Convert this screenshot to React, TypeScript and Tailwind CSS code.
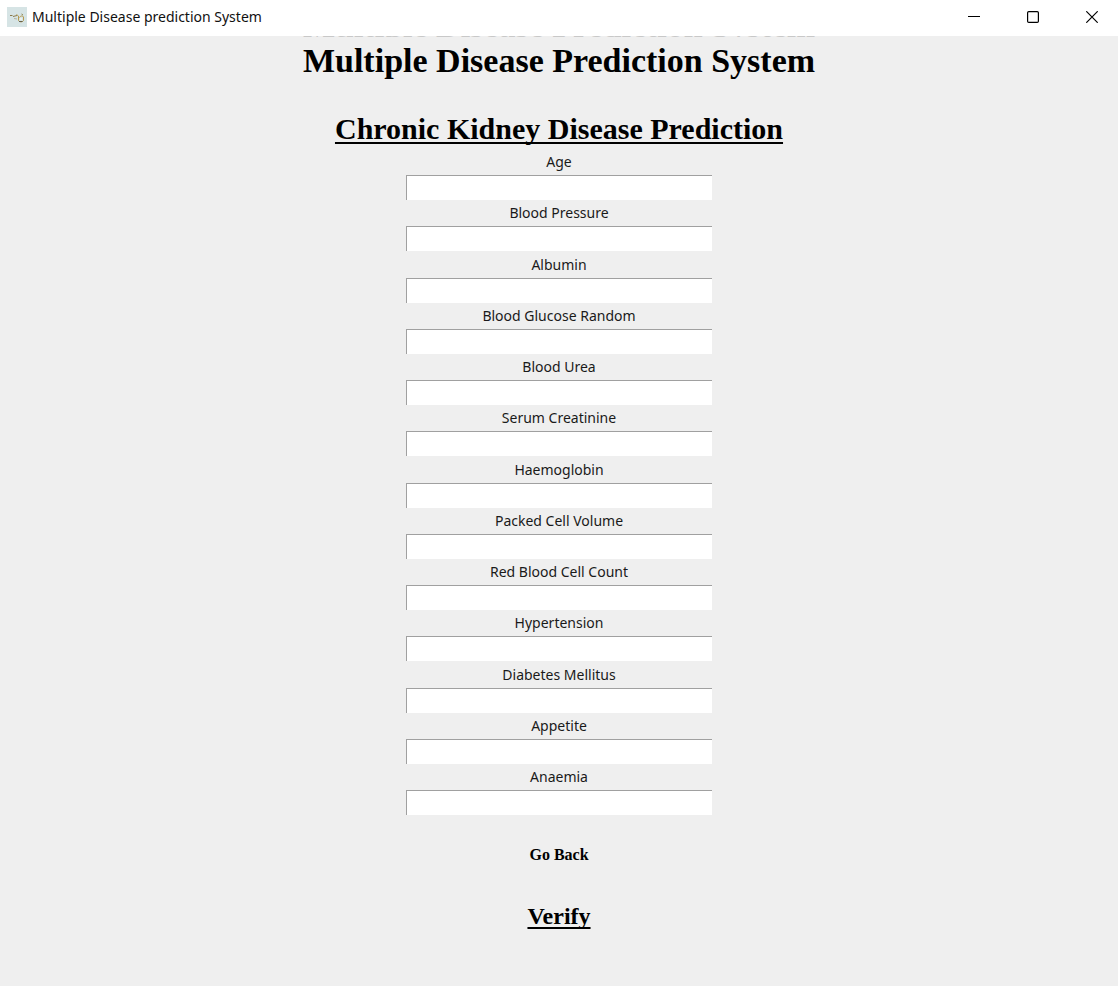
import React from "react";

const title = "Multiple Disease Prediction System";

const fields = [
  "Age",
  "Blood Pressure",
  "Albumin",
  "Blood Glucose Random",
  "Blood Urea",
  "Serum Creatinine",
  "Haemoglobin",
  "Packed Cell Volume",
  "Red Blood Cell Count",
  "Hypertension",
  "Diabetes Mellitus",
  "Appetite",
  "Anaemia",
];

function AppIcon() {
  return (
    <svg width="20" height="20" viewBox="0 0 20 20" aria-hidden="true">
      <rect width="20" height="20" fill="#d6e4e5" />
      <path d="M3 8.500h2.500M6 9.500l4-1" stroke="#8c7a4a" fill="none" />
      <path d="M7 11.500l3 .5" stroke="#b7b59c" fill="none" />
      <path d="M9.500 7.500l2 1.500v4.500c.5 1.500 4 2 5 0V10c-.5-1.500-3-1.500-4 .5" stroke="#b59a50" fill="none" />
      <path d="M14.500 7l1.500 1" stroke="#8b8455" fill="none" />
      <path d="M12 14.500h3.500" stroke="#66604a" fill="none" />
      <path d="M13 11h2v2h-2z" fill="#eaf1ef" />
    </svg>
  );
}

function TitleBar() {
  return (
    <header className="flex h-9 items-center justify-between bg-white pb-0.5 font-['Noto_Sans',sans-serif]">
      <div className="flex items-center gap-[5px] pl-[7px]">
        <AppIcon />
        <span className="text-[14px] leading-5 text-[#111]">Multiple Disease prediction System</span>
      </div>
      <div className="flex gap-[7px]">
        <button type="button" aria-label="Minimize" className="flex h-8 w-[52px] items-center justify-center">
          <svg width="12" height="12" viewBox="0 0 12 12"><path d="M0 5.500h12" stroke="#000" /></svg>
        </button>
        <button type="button" aria-label="Maximize" className="flex h-8 w-[52px] items-center justify-center">
          <svg width="12" height="12" viewBox="0 0 12 12"><rect x="0.6" y="0.6" width="10.8" height="10.8" rx="1.2" fill="none" stroke="#000" strokeWidth="1.2" /></svg>
        </button>
        <button type="button" aria-label="Close" className="flex h-8 w-[52px] items-center justify-center">
          <svg width="12" height="12" viewBox="0 0 12 12"><path d="M0.300 0.300l11.400 11.400M11.700 0.300L0.300 11.700" stroke="#000" strokeWidth="1.2" /></svg>
        </button>
      </div>
    </header>
  );
}

export default function App() {
  return (
    <div className="flex min-h-screen flex-col bg-[#efefef] text-black">
      <TitleBar />
      <main className="flex flex-1 flex-col items-center font-['Liberation_Serif',serif]">
        <div aria-hidden="true" className="flex h-px flex-col justify-end overflow-hidden text-[34px] leading-[22px] font-bold text-[#c8c8c8]">
          {title}
        </div>
        <h1 className="pt-1 text-[34px] leading-10 font-bold">{title}</h1>
        <h2 className="mt-[30px] text-[30px] leading-9 font-bold underline decoration-2 underline-offset-3 [text-decoration-skip-ink:none]">
          Chronic Kidney Disease Prediction
        </h2>
        <form className="mt-0.5 flex flex-col items-center" onSubmit={(e) => e.preventDefault()}>
          <div className="flex min-h-[666px] flex-col justify-between">
            {fields.map((name) => (
              <div key={name} className="flex flex-col items-center font-['Noto_Sans',sans-serif]">
                <label htmlFor={name} className="text-[14px] leading-[26px] text-[#1a1a1a]">
                  {name}
                </label>
                <input
                  id={name}
                  type="text"
                  className="h-[25px] w-[306px] border-t border-l border-[#a0a0a0] bg-white px-1 text-[14px] outline-none"
                />
              </div>
            ))}
          </div>
          <button type="button" className="mt-7 text-[16px] leading-6 font-bold">Go Back</button>
          <button type="submit" className="mt-[35px] text-[24px] leading-7 font-bold underline decoration-2 underline-offset-3 [text-decoration-skip-ink:none]">
            Verify
          </button>
        </form>
      </main>
    </div>
  );
}
